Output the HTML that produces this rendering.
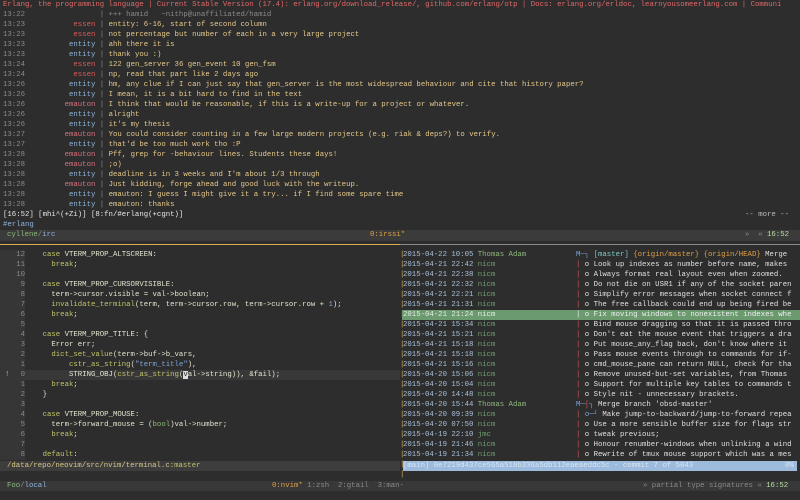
<!DOCTYPE html>
<html><head><meta charset="utf-8"><style>
body{margin:0;width:800px;height:500px;background:#2d2d2d;overflow:hidden;position:relative;font-family:"Liberation Mono","DejaVu Sans Mono",monospace;font-size:7.33px;line-height:10px;color:#ddd}
div{position:absolute;white-space:pre;height:10px}
.ts{color:#8a8a8a}.es{color:#d65a5a}.en{color:#8fb4dc}.em{color:#d9707e}.m{color:#e6c98c}.g{color:#8a8a8a}
.k{color:#c2c46a}.n{color:#8a8a8a}.b{color:#7fa6d8}.y{color:#e0b050}.gr{color:#8db87a}.gd{color:#6f9f72}.r{color:#d55}
.c{color:#7ec8c8}.o{color:#e0a048}
</style></head><body>
<div style="left:3px;top:0;color:#e06868">Erlang, the programming language | Current Stable Version (17.4): erlang.org/download_release/, github.com/erlang/otp | Docs: erlang.org/erldoc, learnyousomeerlang.com | Communi</div>

<div style="left:3px;top:10px"><span class="ts">13:22</span>                 <span class="g">| +++ hamid   ~nithp@unaffiliated/hamid</span></div>
<div style="left:3px;top:20px"><span class="ts">13:23</span>           <span class="es">essen</span> <span class="g">|</span> <span class="m">entity: 6-16, start of second column</span></div>
<div style="left:3px;top:30px"><span class="ts">13:23</span>           <span class="es">essen</span> <span class="g">|</span> <span class="m">not percentage but number of each in a very large project</span></div>
<div style="left:3px;top:40px"><span class="ts">13:23</span>          <span class="en">entity</span> <span class="g">|</span> <span class="m">ahh there it is</span></div>
<div style="left:3px;top:50px"><span class="ts">13:23</span>          <span class="en">entity</span> <span class="g">|</span> <span class="m">thank you :)</span></div>
<div style="left:3px;top:60px"><span class="ts">13:24</span>           <span class="es">essen</span> <span class="g">|</span> <span class="m">122 gen_server 36 gen_event 10 gen_fsm</span></div>
<div style="left:3px;top:70px"><span class="ts">13:24</span>           <span class="es">essen</span> <span class="g">|</span> <span class="m">np, read that part like 2 days ago</span></div>
<div style="left:3px;top:80px"><span class="ts">13:26</span>          <span class="en">entity</span> <span class="g">|</span> <span class="m">hm, any clue if I can just say that gen_server is the most widespread behaviour and cite that history paper?</span></div>
<div style="left:3px;top:90px"><span class="ts">13:26</span>          <span class="en">entity</span> <span class="g">|</span> <span class="m">I mean, it is a bit hard to find in the text</span></div>
<div style="left:3px;top:100px"><span class="ts">13:26</span>         <span class="em">emauton</span> <span class="g">|</span> <span class="m">I think that would be reasonable, if this is a write-up for a project or whatever.</span></div>
<div style="left:3px;top:110px"><span class="ts">13:26</span>          <span class="en">entity</span> <span class="g">|</span> <span class="m">alright</span></div>
<div style="left:3px;top:120px"><span class="ts">13:26</span>          <span class="en">entity</span> <span class="g">|</span> <span class="m">it's my thesis</span></div>
<div style="left:3px;top:130px"><span class="ts">13:27</span>         <span class="em">emauton</span> <span class="g">|</span> <span class="m">You could consider counting in a few large modern projects (e.g. riak &amp; deps?) to verify.</span></div>
<div style="left:3px;top:140px"><span class="ts">13:27</span>          <span class="en">entity</span> <span class="g">|</span> <span class="m">that'd be too much work tho :P</span></div>
<div style="left:3px;top:150px"><span class="ts">13:28</span>         <span class="em">emauton</span> <span class="g">|</span> <span class="m">Pff, grep for -behaviour lines. Students these days!</span></div>
<div style="left:3px;top:160px"><span class="ts">13:28</span>         <span class="em">emauton</span> <span class="g">|</span> <span class="m">;o)</span></div>
<div style="left:3px;top:170px"><span class="ts">13:28</span>          <span class="en">entity</span> <span class="g">|</span> <span class="m">deadline is in 3 weeks and I'm about 1/3 through</span></div>
<div style="left:3px;top:180px"><span class="ts">13:28</span>         <span class="em">emauton</span> <span class="g">|</span> <span class="m">Just kidding, forge ahead and good luck with the writeup.</span></div>
<div style="left:3px;top:190px"><span class="ts">13:28</span>          <span class="en">entity</span> <span class="g">|</span> <span class="m">emauton: I guess I might give it a try... if I find some spare time</span></div>
<div style="left:3px;top:200px"><span class="ts">13:28</span>          <span class="en">entity</span> <span class="g">|</span> <span class="m">emauton: thanks</span></div>
<div style="left:3px;top:210px;color:#e8e8e8">[16:52] [mhi^(+Zi)] [8:fn/#erlang(+cgnt)]</div>
<div style="left:745px;top:210px;color:#bbb">-- more --</div>
<div style="left:3px;top:220px;color:#8fb4dc">#erlang</div>

<div style="left:0;top:230px;width:800px;height:11px;background:#3b3b3b"></div>
<div style="left:7px;top:230px"><span class="gr">cyllene</span><span class="g">/</span><span class="en">irc</span></div>
<div style="left:370px;top:230px" class="o">0:irssi*</div>
<div style="left:745px;top:230px"><span class="g">»  «</span> <span style="color:#b8e0a0">16:52</span></div>
<div style="left:0;top:244px;width:400px;height:1px;background:#e0b050"></div>
<div style="left:400px;top:244px;width:400px;height:1px;background:#8a8a8a"></div>

<div style="left:0;top:250px;width:25px;height:210px;background:#363636"></div>
<div style="left:25px;top:370px;width:375px;height:10px;background:#383838"></div>
<div style="left:0;top:250px;width:25px;height:210px;text-align:right;color:#8a8a8a;white-space:pre;line-height:10px">12
11
10
9
8
7
6
5
4
3
2
1
0
1
2
3
4
5
6
7
8</div>
<div style="left:5px;top:370px" class="y">!</div>
<div style="left:25px;top:250px;height:210px;line-height:10px;color:#e4e4d0">    <span class="k">case</span> VTERM_PROP_ALTSCREEN:
      <span class="k">break</span>;

    <span class="k">case</span> VTERM_PROP_CURSORVISIBLE:
      term-&gt;cursor.visible = val-&gt;boolean;
      <span class="k">invalidate_terminal</span>(term, term-&gt;cursor.row, term-&gt;cursor.row + <span class="b">1</span>);
      <span class="k">break</span>;

    <span class="k">case</span> VTERM_PROP_TITLE: {
      Error err;
      <span class="k">dict_set_value</span>(term-&gt;buf-&gt;b_vars,
          <span class="k">cstr_as_string</span>(<span class="b">"term_title"</span>),
          STRING_OBJ(<span class="k">cstr_as_string</span>(<span style="background:#ddd;color:#222">v</span>al-&gt;string)), &amp;fail);
      <span class="k">break</span>;
    }

    <span class="k">case</span> VTERM_PROP_MOUSE:
      term-&gt;forward_mouse = (<span class="gr">bool</span>)val-&gt;number;
      <span class="k">break</span>;

    <span class="k">default</span>:</div>

<div style="left:400px;top:250px;height:230px;line-height:10px" class="y">|
|
|
|
|
|
|
|
|
|
|
|
|
|
|
|
|
|
|
|
|
|
|
</div>
<div style="left:402px;top:310px;width:398px;height:10px;background:#6a9a6e"></div>
<div style="left:403px;top:250px;height:210px;line-height:10px;color:#a8c0d8">2015-04-22 10:05 <span class="gr">Thomas Adam</span>
2015-04-21 22:42 <span class="gd">nicm</span>
2015-04-21 22:38 <span class="gd">nicm</span>
2015-04-21 22:32 <span class="gd">nicm</span>
2015-04-21 22:21 <span class="gd">nicm</span>
2015-04-21 21:31 <span class="gd">nicm</span>
<span style="color:#e8f0e8">2015-04-21 21:24 nicm</span>
2015-04-21 15:34 <span class="gd">nicm</span>
2015-04-21 15:21 <span class="gd">nicm</span>
2015-04-21 15:18 <span class="gd">nicm</span>
2015-04-21 15:18 <span class="gd">nicm</span>
2015-04-21 15:16 <span class="gd">nicm</span>
2015-04-20 15:06 <span class="gd">nicm</span>
2015-04-20 15:04 <span class="gd">nicm</span>
2015-04-20 14:48 <span class="gd">nicm</span>
2015-04-20 15:44 <span class="gr">Thomas Adam</span>
2015-04-20 09:39 <span class="gd">nicm</span>
2015-04-20 07:50 <span class="gd">nicm</span>
2015-04-19 22:10 <span class="gd">jmc</span>
2015-04-19 21:46 <span class="gd">nicm</span>
2015-04-19 21:34 <span class="gd">nicm</span></div>
<div style="left:576px;top:250px;height:210px;line-height:10px;color:#e0e0e0"><span class="b">M─┐</span> <span class="c">[master]</span> <span class="o">{origin/master}</span> <span class="o">{origin/HEAD}</span> Merge
<span class="r">|</span> o Look up indexes as number before name, makes
<span class="r">|</span> o Always format real layout even when zoomed.
<span class="r">|</span> o Do not die on USR1 if any of the socket paren
<span class="r">|</span> o Simplify error messages when socket connect f
<span class="r">|</span> o The free callback could end up being fired be
<span style="color:#f0f0f0">| o Fix moving windows to nonexistent indexes whe</span>
<span class="r">|</span> o Bind mouse dragging so that it is passed thro
<span class="r">|</span> o Don't eat the mouse event that triggers a dra
<span class="r">|</span> o Put mouse_any_flag back, don't know where it
<span class="r">|</span> o Pass mouse events through to commands for if-
<span class="r">|</span> o cmd_mouse_pane can return NULL, check for tha
<span class="r">|</span> o Remove unused-but-set variables, from Thomas
<span class="r">|</span> o Support for multiple key tables to commands t
<span class="r">|</span> o Style nit - unnecessary brackets.
<span class="b">M─</span><span class="r">┤</span><span class="b">┐</span> Merge branch 'obsd-master'
<span class="r">|</span> <span class="b">o─┘</span> Make jump-to-backward/jump-to-forward repea
<span class="r">|</span> o Use a more sensible buffer size for flags str
<span class="r">|</span> o tweak previous;
<span class="r">|</span> o Honour renumber-windows when unlinking a wind
<span class="r">|</span> o Rewrite of tmux mouse support which was a mes</div>

<div style="left:0;top:461px;width:400px;height:10px;background:#3d3d3d"></div>
<div style="left:7px;top:461px;color:#dcc888">/data/repo/neovim/src/nvim/terminal.c:<span class="k">master</span></div>
<div style="left:403px;top:461px;width:394px;height:10px;background:#9dbbdc"></div>
<div style="left:403px;top:461px;color:#d8e6f4">[main] 0e7219d437ce565a518b336a5db112eaeaeddc5c - commit 7 of 5043</div>
<div style="left:785px;top:461px;color:#d8e6f4">0%</div>

<div style="left:0;top:481px;width:800px;height:10px;background:#383838"></div>
<div style="left:7px;top:481px"><span class="gr">Foo</span><span class="g">/</span><span class="en">local</span></div>
<div style="left:272px;top:481px"><span class="o">0:nvim*</span> <span class="g">1:zsh  2:gtail  3:man-</span></div>
<div style="left:643px;top:481px"><span class="g">» partial type signatures «</span> <span style="color:#b8e0a0">16:52</span></div>
</body></html>
